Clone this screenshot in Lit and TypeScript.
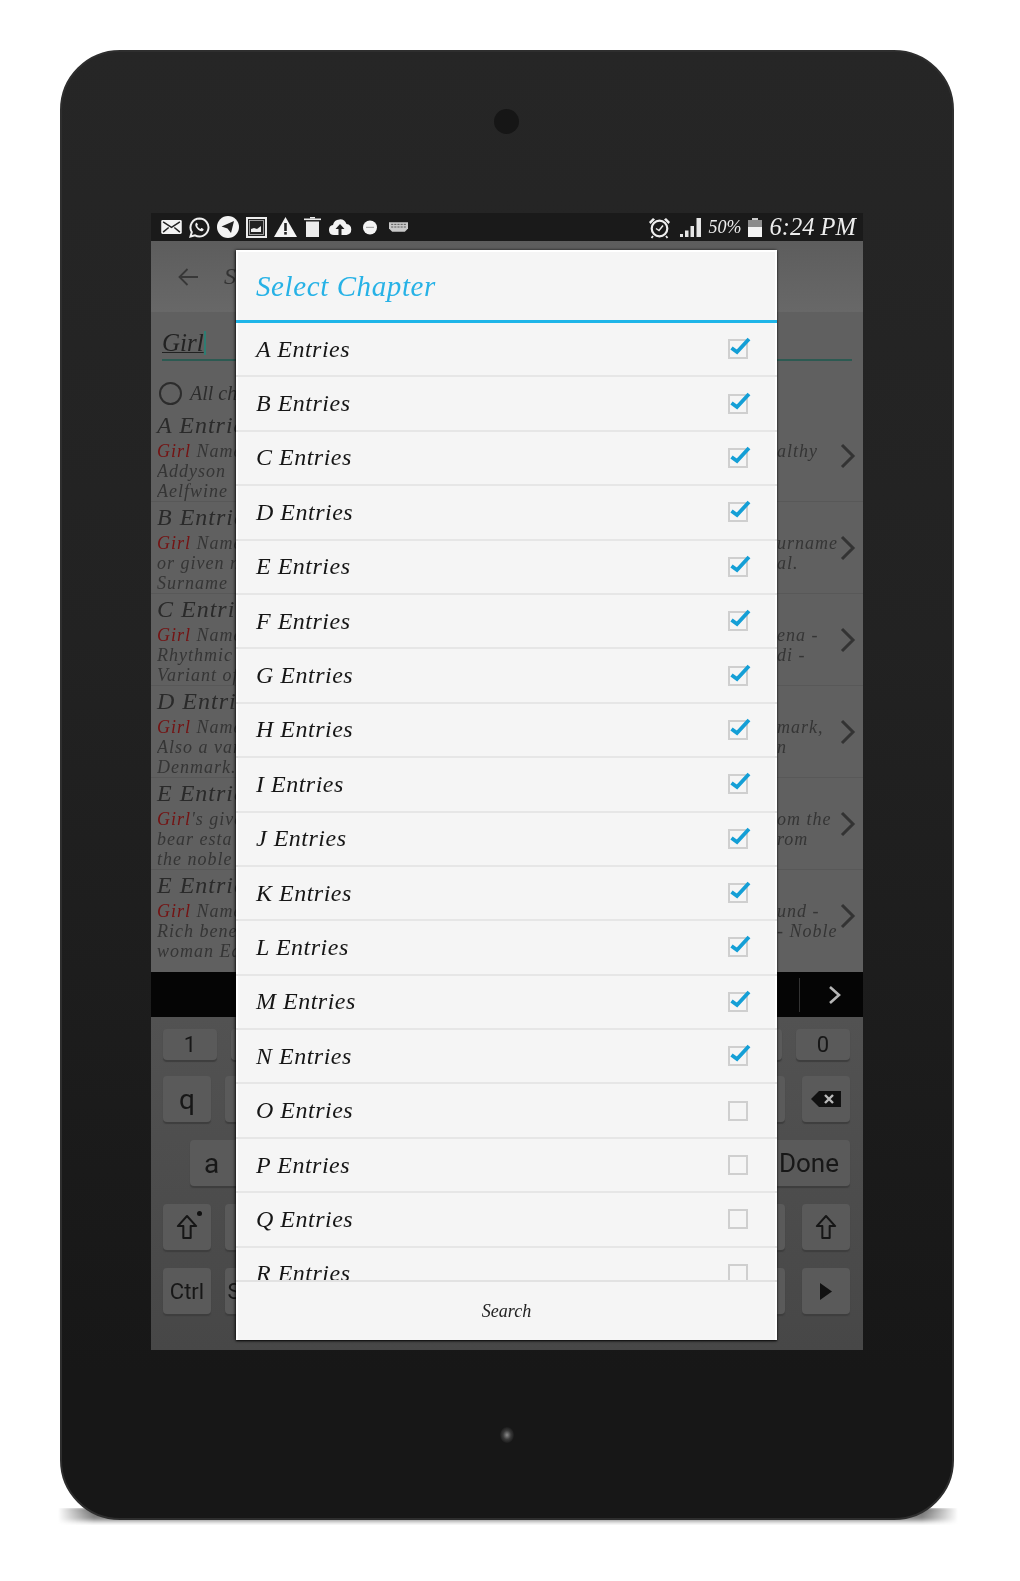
import { LitElement, html, css, svg } from "lit";
import { customElement } from "lit/decorators.js";

const CHAPTERS = "ABCDEFGHIJKLMNOPQR".split("");
const CHECKED = 14;

const ITEMS = [
  { t: "A Entries", l: [["Girl", " Name"], ["", "Addyson"], ["", "Aelfwine"]], r: ["althy", ""] },
  { t: "B Entries", l: [["Girl", " Name"], ["", "or given name"], ["", "Surname"]], r: ["urname", "al."] },
  { t: "C Entries", l: [["Girl", " Name"], ["", "Rhythmic"], ["", "Variant of"]], r: ["ena -", "di -"] },
  { t: "D Entries", l: [["Girl", " Name"], ["", "Also a variant"], ["", "Denmark."]], r: ["mark,", "n"] },
  { t: "E Entries", l: [["Girl", "'s given"], ["", "bear esta"], ["", "the noble"]], r: ["om the", "rom"] },
  { t: "E Entries", l: [["Girl", " Name"], ["", "Rich bene"], ["", "woman Ed"]], r: ["und -", "- Noble"] },
];

const icons = {
  mail: svg`<svg width="21" height="14" viewBox="0 0 22 15"><rect width="22" height="15" rx="1.5" fill="#f2f2f2"/><path d="M2 2l9 6 9-6M2 13l6-5M20 13l-6-5" fill="none" stroke="#222" stroke-width="1.6"/></svg>`,
  whatsapp: svg`<svg width="21" height="21" viewBox="0 0 21 21"><path d="M10.5 1.5a9 9 0 0 0-7.7 13.6L1.5 19.5l4.5-1.2A9 9 0 1 0 10.5 1.5z" fill="none" stroke="#efefef" stroke-width="2"/><path d="M7 6c-1.3 1.2-.8 3.4 1 5.5s4 3.3 5.6 2.6c1-.5 1.3-1.5.8-2l-1.7-1c-.5-.2-.8.7-1.3.8-1 0-3-2-3.2-3.2 0-.5.8-.8.7-1.3L8 6c-.3-.4-.6-.3-1 0z" fill="#efefef"/></svg>`,
  telegram: svg`<svg width="22" height="22" viewBox="0 0 22 22"><circle cx="11" cy="11" r="11" fill="#f4f4f4"/><path d="M4.5 10.5L17 5l-3 12-3.500-4.500z" fill="#222"/></svg>`,
  image: svg`<svg width="21" height="21" viewBox="0 0 21 21"><rect x="1" y="1" width="19" height="19" fill="#222" stroke="#ececec" stroke-width="2"/><rect x="3.5" y="3.5" width="14" height="14" fill="none" stroke="#bbb" stroke-width=".8"/><path d="M5 15v-3l3-1 3 1 4-3v6z" fill="#ececec"/></svg>`,
  warning: svg`<svg width="23" height="20" viewBox="0 0 23 20"><path d="M11.5 0L23 20H0z" fill="#f4f4f4"/><rect x="10.2" y="6" width="2.6" height="8" fill="#222"/><rect x="10.2" y="15" width="2.6" height="2.6" fill="#222"/></svg>`,
  trash: svg`<svg width="17" height="20" viewBox="0 0 17 20"><path d="M2 4.5h13V20H2z" fill="#ececec"/><path d="M0 1.5h17v1.600H0z" fill="#ececec"/><path d="M6 0h5v1.500H6z" fill="#ececec"/></svg>`,
  cloud: svg`<svg width="24" height="16" viewBox="0 0 24 16"><path d="M6 16a5 5 0 0 1-1-9.900A7 7 0 0 1 18.500 5.100 5.500 5.500 0 0 1 18.500 16z" fill="#f4f4f4"/><path d="M12 5l-4.500 5H10.500v6h3v-6h3z" fill="#222"/></svg>`,
  dot: svg`<svg class="m3" width="16" height="15" viewBox="0 0 16 15"><ellipse cx="8" cy="7.5" rx="7" ry="7" fill="#f4f4f4"/><rect x="4" y="6.8" width="8" height="1.2" fill="#aaa"/></svg>`,
  keyboard: svg`<svg class="m4" width="19" height="12" viewBox="0 0 18 11"><path d="M0 1h18v6l-3 3H3L0 7z" fill="#c8c8c8"/><path d="M2 3h14M2 5.500h14" stroke="#555" stroke-width=".9" stroke-dasharray="2 1"/></svg>`,
  alarm: svg`<svg width="23" height="23" viewBox="0 0 23 23"><circle cx="11.5" cy="12.5" r="7.8" fill="none" stroke="#efefef" stroke-width="2.2"/><path d="M8 12.5l3 2 4-5" fill="none" stroke="#efefef" stroke-width="1.5"/><path d="M1 6l4-4 2 1.500-4.500 4.500zM22 6l-4-4-2 1.500 4.500 4.500z" fill="#efefef"/><path d="M5 20l-1.500 2M18 20l1.500 2" stroke="#efefef" stroke-width="1.8"/></svg>`,
  signal: svg`<svg width="21" height="19" viewBox="0 0 21 19"><path d="M0 16h3v3H0zM5 12.500h3.500V19H5zM10.500 8h3.500v11h-3.500zM16.500 0H21v19h-4.500z" fill="#e6e6e6"/></svg>`,
  battery: svg`<svg width="14" height="19" viewBox="0 0 14 19"><path d="M4 0h6v2H4z" fill="#ccc"/><path d="M0 2h14v17H0z" fill="#8c8c8c"/><path d="M0 9h14v10H0z" fill="#f4f4f4"/></svg>`,
  back: svg`<svg width="20" height="18" viewBox="0 0 20 18"><path d="M9.5 1L1.5 9l8 8M1.500 9H20" fill="none" stroke="#383838" stroke-width="1.8"/></svg>`,
  shift: svg`<svg width="22" height="26" viewBox="0 0 24 28"><path d="M12 2L2 13h6v13h8V13h6z" fill="none" stroke="#161616" stroke-width="2.2" stroke-linejoin="round"/></svg>`,
  del: svg`<svg width="30" height="16" viewBox="0 0 30 16"><path d="M8 0h22v16H8L0 8z" fill="#111"/><path d="M14 4l8 8M22 4l-8 8" stroke="#bbb" stroke-width="2.4"/></svg>`,
  play: svg`<svg width="12" height="17" viewBox="0 0 12 17"><path d="M0 0l12 8.500L0 17z" fill="#111"/></svg>`,
  chevron: svg`<svg width="16" height="26" viewBox="0 0 16 26"><path d="M2 2l11 11L2 24" fill="none" stroke="#333" stroke-width="3"/></svg>`,
  chevronLight: svg`<svg width="14" height="20" viewBox="0 0 14 20"><path d="M2 2l9 8-9 8" fill="none" stroke="#b5b5b5" stroke-width="2.6"/></svg>`,
  check: svg`<svg width="26" height="22" viewBox="0 0 26 22"><path d="M4.5 12l5.500 4L22 3" fill="none" stroke="#149fd6" stroke-width="3.8"/></svg>`,
};

@customElement("app-root")
export class AppRoot extends LitElement {
  static styles = css`
    :host { display: block; width: 1020px; height: 1581px; background: #fff; overflow: hidden; font-family: "Liberation Serif", serif; }
    .page { position: relative; padding: 50px 0 0 60px; }
    .floor { position: absolute; left: 58px; top: 1508px; width: 900px; height: 17px; background: linear-gradient(#666 0, #888 60%, #ddd 85%, rgba(255,255,255,0)); filter: blur(1px); -webkit-mask-image: linear-gradient(90deg, transparent, #000 4%, #000 96%, transparent); mask-image: linear-gradient(90deg, transparent, #000 4%, #000 96%, transparent); }
    .tablet { position: relative; width: 894px; height: 1470px; box-sizing: border-box; border-radius: 60px; border: 2px solid #2e2e2e; background: linear-gradient(#262626, #222 40%, #171717 90%); padding: 161px 0 0 89px; filter: blur(.45px); }
    .camera { position: absolute; left: 432px; top: 57px; width: 25px; height: 25px; border-radius: 50%; background: #161616; }
    .home { position: absolute; left: 438px; top: 1375px; width: 14px; height: 16px; border-radius: 50%; background: radial-gradient(#8a8a8a, #3a3a3a 40%, #181818 75%); }

    .screen { position: relative; width: 712px; height: 1137px; display: flex; flex-direction: column; background: #606060; overflow: hidden; }
    .status { height: 28px; flex: none; background: #1a1a1a; display: flex; align-items: center; padding: 0 7px 0 10px; color: #eee; }
    .status .icons { display: flex; align-items: center; gap: 7px; }
    .status .sp { flex: 1; }
    .m3 { margin-left: 3px; }
    .m4 { margin-left: 4px; }
    .gap-a { width: 9px; }
    .status .pct { font-size: 18px; font-style: italic; margin: 0 6px 0 8px; }
    .status .time { font-size: 24.5px; font-style: italic; margin-left: 8px; }
    svg { display: block; flex: none; }

    .bar { height: 71px; flex: none; box-sizing: border-box; padding: 0 0 0 27px; display: flex; align-items: center; gap: 26px; background: linear-gradient(#5d5d5d, #686868); color: #333; font-size: 24px; font-style: italic; }
    .search { height: 49px; flex: none; margin: 0 11px; box-sizing: border-box; border-bottom: 2px solid #2c5a52; font-size: 25px; font-style: italic; color: #222; padding: 17px 0 0 0; line-height: 28px; }
    .search u { text-decoration-thickness: 1px; }
    .caret { display: inline-block; width: 2px; height: 24px; background: #2e7d72; vertical-align: -4px; }
    .all { height: 34px; flex: none; display: flex; align-items: center; gap: 8px; padding: 15px 0 0 8px; font-size: 20px; font-style: italic; color: #2c2c2c; }
    .radio { width: 19px; height: 19px; border-radius: 50%; border: 2px solid #2c2c2c; }

    .list { flex: 1; min-height: 0; display: flex; flex-direction: column; }
    .item { height: 92px; flex: none; box-sizing: border-box; padding: 1px 0 0 6px; border-bottom: 1px solid #585858; position: relative; }
    .item:last-child { border-bottom: none; }
    .texts { width: 692px; }
    .ttl { height: 30px; line-height: 28px; font-size: 24px; font-style: italic; color: #2a2a2a; letter-spacing: 1px; white-space: nowrap; }
    .ln { display: grid; grid-template-columns: 620px 1fr; height: 20px; line-height: 20px; font-size: 18px; font-style: italic; color: #353535; white-space: nowrap; letter-spacing: 1px; }
    .ln > span { overflow: hidden; }
    .girl { color: #741212; }
    .chev { position: absolute; right: 7px; top: 33px; }

    .band { height: 45px; flex: none; background: #050505; display: flex; align-items: center; justify-content: flex-end; padding-right: 21px; gap: 28px; }
    .band i { display: block; width: 1px; height: 34px; background: #333; }

    .kb { height: 333px; flex: none; box-sizing: border-box; background: linear-gradient(#525252, #474747); display: flex; flex-direction: column; padding: 12px 13px 0 12px; }
    .row { display: flex; flex: none; justify-content: space-between; align-items: stretch; margin-bottom: 18px; height: 46px; }
    .row.n { height: 31px; margin-bottom: 16px; }
    .row.a { padding-left: 27px; }
    .grp { display: flex; gap: 14px; }
    .grp.r { gap: 17px; }
    .key { width: 48px; box-sizing: border-box; background: #5a5a5a; border-radius: 4px; box-shadow: 0 2px 1px #3e3e3e; display: flex; align-items: center; justify-content: center; font-family: Roboto, "Liberation Sans", sans-serif; color: #171717; font-size: 28px; position: relative; }
    .n .key { width: 54px; font-size: 22px; }
    .key.wide { width: 80px; font-size: 26px; justify-content: flex-end; padding-right: 11px; }
    .key.lead { width: 64px; justify-content: flex-start; padding-left: 14px; }
    .key.sm { font-size: 22px; }
    .pip { position: absolute; right: 9px; top: 7px; width: 5px; height: 5px; border-radius: 50%; background: #111; }

    .dialog { position: absolute; left: 85px; top: 37px; width: 541px; height: 1090px; box-sizing: border-box; background: #f5f5f5; box-shadow: inset 0 2px #fff, inset 2px 0 #fff, inset -2px 0 #fff, -1px 0 3px rgba(0,0,0,.6), 0 1px 2px rgba(0,0,0,.8); display: flex; flex-direction: column; }
    .title { height: 73px; flex: none; box-sizing: border-box; border-bottom: 3px solid #1fb5e8; padding: 2px 0 0 20px; display: flex; align-items: center; font-size: 29px; font-style: italic; color: #27b2e6; letter-spacing: .6px; }
    .rows { flex: 1; min-height: 0; overflow: hidden; }
    .rowi { height: 54.4px; box-sizing: border-box; display: flex; align-items: center; justify-content: space-between; padding: 1px 29px 1px 20px; border-bottom: 2px solid #e6e6e6; font-size: 24px; font-style: italic; color: #161616; letter-spacing: .5px; }
    .cb { position: relative; width: 20px; height: 20px; box-sizing: border-box; border: 2px solid #cfcfcf; }
    .cb svg { position: absolute; left: -3px; top: -5px; }
    .foot { height: 60px; flex: none; box-sizing: border-box; border-top: 2px solid #e2e2e2; display: flex; align-items: center; justify-content: center; font-size: 18px; font-style: italic; color: #222; }
  `;

  render() {
    return html`<div class="page">
      <div class="floor"></div>
      <div class="tablet">
      <div class="camera"></div>
      <div class="home"></div>
      <div class="screen">
        <div class="status">
          <div class="icons">${icons.mail}${icons.whatsapp}${icons.telegram}${icons.image}${icons.warning}${icons.trash}${icons.cloud}${icons.dot}${icons.keyboard}</div>
          <div class="sp"></div>
          ${icons.alarm}<span class="gap-a"></span>${icons.signal}
          <span class="pct">50%</span>${icons.battery}<span class="time">6:24 PM</span>
        </div>
        <div class="bar">${icons.back}<span>Search</span></div>
        <div class="search"><u>Girl</u><span class="caret"></span></div>
        <div class="all"><span class="radio"></span><span>All chapters</span></div>
        <div class="list">
          ${ITEMS.map((it) => html`<div class="item">
            <div class="texts">
              <div class="ttl">${it.t}</div>
              ${it.l.map((l, i) => html`<div class="ln"><span><span class="girl">${l[0]}</span>${l[1]}</span><span>${it.r[i] ?? ""}</span></div>`)}
            </div>
            <div class="chev">${icons.chevron}</div>
          </div>`)}
        </div>
        <div class="band"><i></i>${icons.chevronLight}</div>
        <div class="kb">
          <div class="row n"><div class="grp"><div class="key">1</div><div class="key">2</div></div><div class="grp"><div class="key">9</div><div class="key">0</div></div></div>
          <div class="row"><div class="grp"><div class="key">q</div><div class="key">w</div></div><div class="grp r"><div class="key">p</div><div class="key">${icons.del}</div></div></div>
          <div class="row a"><div class="grp"><div class="key lead">a</div></div><div class="grp"><div class="key wide">Done</div></div></div>
          <div class="row"><div class="grp"><div class="key">${icons.shift}<span class="pip"></span></div><div class="key">z</div></div><div class="grp r"><div class="key">m</div><div class="key">${icons.shift}</div></div></div>
          <div class="row"><div class="grp"><div class="key sm">Ctrl</div><div class="key sm">Sym</div></div><div class="grp r"><div class="key">.</div><div class="key">${icons.play}</div></div></div>
        </div>
        <div class="dialog">
          <div class="title">Select Chapter</div>
          <div class="rows">
            ${CHAPTERS.map((c, i) => html`<div class="rowi"><span>${c} Entries</span><span class="cb">${i < CHECKED ? icons.check : ""}</span></div>`)}
          </div>
          <div class="foot">Search</div>
        </div>
      </div>
    </div></div>`;
  }
}
